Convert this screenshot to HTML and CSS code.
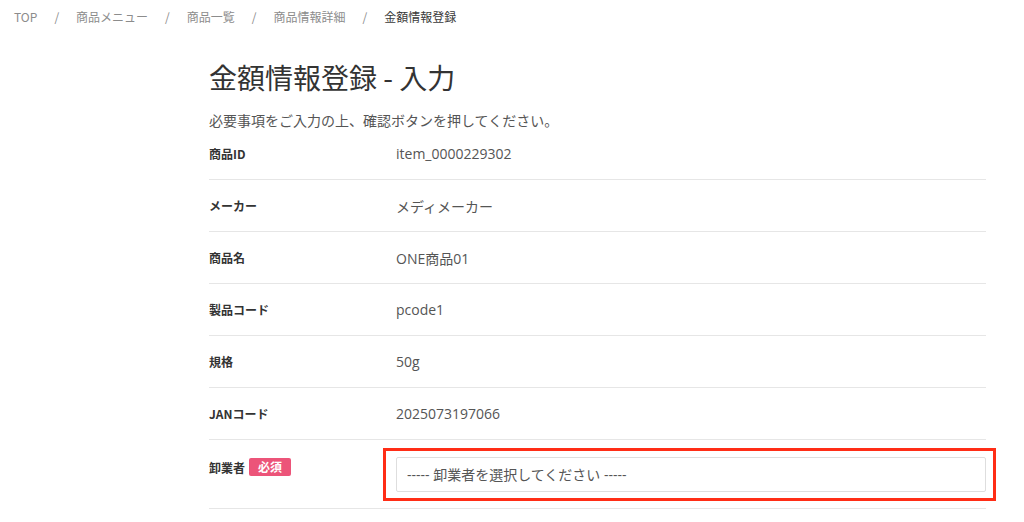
FILE: index.html
```html
<!DOCTYPE html>
<html lang="ja">
<head>
<meta charset="utf-8">
<title>金額情報登録 - 入力</title>
<link rel="stylesheet" href="styles.css">
</head>
<body>
<nav class="breadcrumb">
  <span class="crumb">TOP</span><span class="sep">/</span>
  <span class="crumb">商品メニュー</span><span class="sep">/</span>
  <span class="crumb">商品一覧</span><span class="sep">/</span>
  <span class="crumb">商品情報詳細</span><span class="sep">/</span>
  <span class="crumb current">金額情報登録</span>
</nav>
<main class="content">
  <h1 class="title">金額情報登録 - 入力</h1>
  <p class="lead">必要事項をご入力の上、確認ボタンを押してください。</p>
  <div class="rows">
    <div class="row"><div class="label">商品ID</div><div class="value">item_0000229302</div></div>
    <div class="row"><div class="label">メーカー</div><div class="value">メディメーカー</div></div>
    <div class="row"><div class="label">商品名</div><div class="value">ONE商品01</div></div>
    <div class="row"><div class="label">製品コード</div><div class="value">pcode1</div></div>
    <div class="row"><div class="label">規格</div><div class="value">50g</div></div>
    <div class="row"><div class="label">JANコード</div><div class="value">2025073197066</div></div>
    <div class="row row-form">
      <div class="label">卸業者<span class="badge">必須</span></div>
      <div class="value field">
        <select class="select">
          <option>----- 卸業者を選択してください -----</option>
        </select>
        <div class="highlight"></div>
      </div>
    </div>
  </div>
</main>
</body>
</html>
```
FILE: styles.css
```css
* { box-sizing: border-box; }
html, body { margin: 0; padding: 0; background: #fff; }
body {
  font-family: "Noto Sans CJK JP", "Liberation Sans", sans-serif;
  color: #333;
}
.breadcrumb {
  padding: 8px 14px;
  font-size: 12px;
  line-height: 18px;
  color: #8c8c8c;
  display: flex;
  align-items: center;
}
.sep { margin: 0 17px; }
.crumb.current { color: #3a3a3a; }
.content {
  margin-left: 209px;
  width: 777px;
}
.title {
  margin: 23px 0 0;
  font-size: 28px;
  line-height: 40px;
  font-weight: 400;
  color: #333;
}
.lead {
  margin: 15px 0 0;
  font-size: 14px;
  line-height: 16px;
  color: #555;
}
.row {
  display: grid;
  grid-template-columns: 187px 1fr;
  align-items: center;
  height: 52px;
  border-bottom: 1px solid #e6e6e6;
}
.label {
  font-size: 12px;
  font-weight: 700;
  color: #333;
  display: flex;
  align-items: center;
  gap: 4px;
}
.value {
  font-family: "Open Sans", "Noto Sans CJK JP", sans-serif;
  font-size: 14px;
  color: #555;
}
.row-form {
  height: auto;
  align-items: start;
  padding: 17px 0 16px;
}
.row-form .label { height: 20px; }
.badge {
  display: inline-block;
  background: #ec5479;
  color: #fff;
  font-size: 12px;
  font-weight: 700;
  line-height: 18px;
  padding: 0 9px;
  border-radius: 2px;
}
.field { position: relative; }
.select {
  display: block;
  width: 100%;
  height: 35px;
  border: 1px solid #dedede;
  border-radius: 2px;
  background: #fff;
  appearance: none;
  -webkit-appearance: none;
  font-family: "Open Sans", "Noto Sans CJK JP", sans-serif;
  font-size: 14px;
  color: #555;
  padding: 0 10px;
}
.highlight {
  position: absolute;
  top: -9px;
  left: -13px;
  right: -10px;
  bottom: -9px;
  border: 3px solid #ff2d16;
  pointer-events: none;
}
```
